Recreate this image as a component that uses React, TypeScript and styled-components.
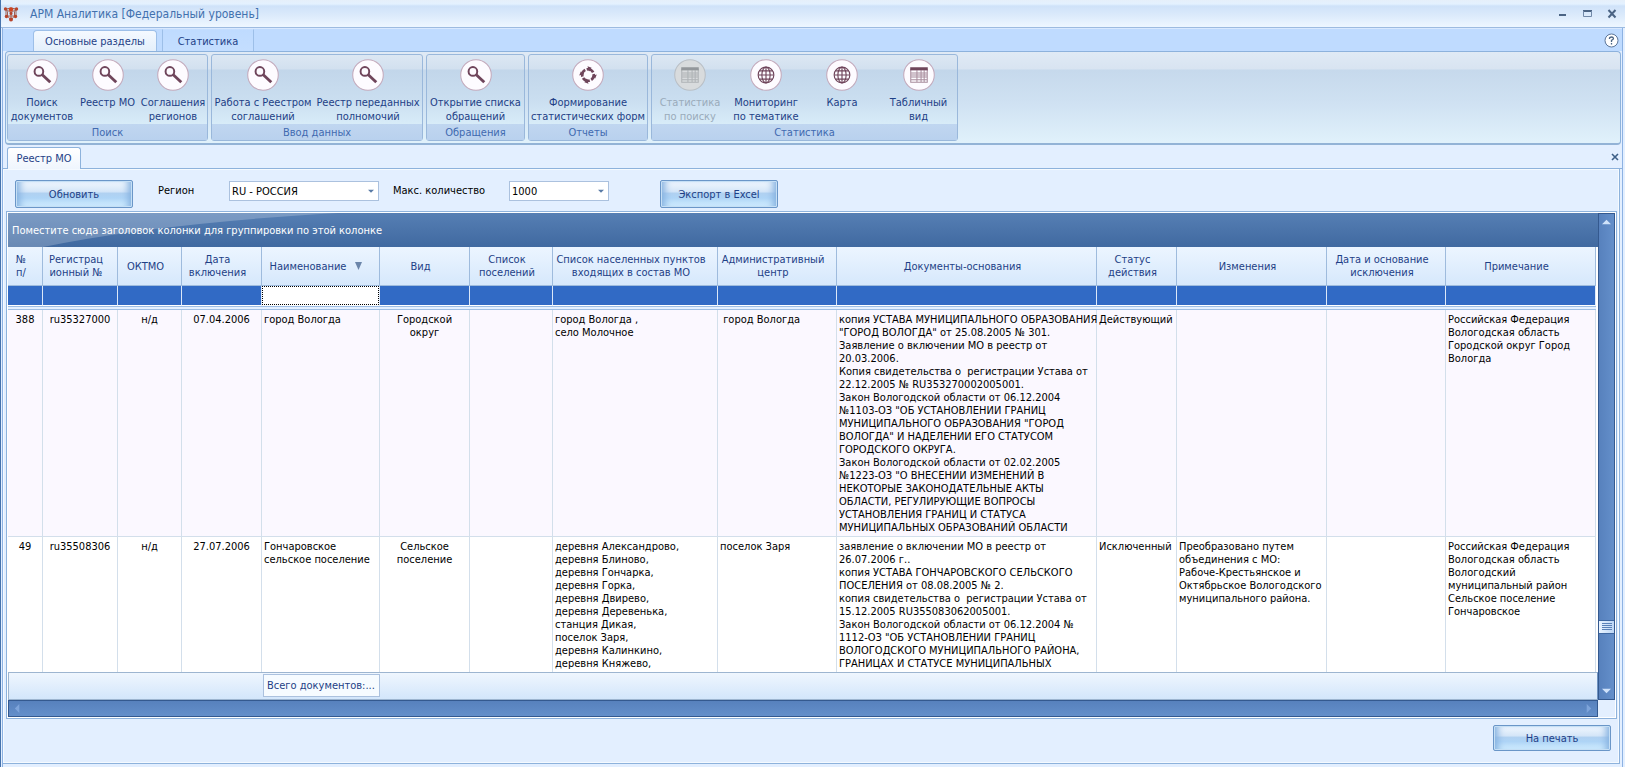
import React from 'react';
import styled, { createGlobalStyle } from 'styled-components';

const Global = createGlobalStyle`
  *, *::before, *::after { box-sizing: border-box; }
  html, body, #root { height: 100%; margin: 0; }
  body, button, select, input {
    font-family: 'DejaVu Sans Condensed', 'DejaVu Sans', Tahoma, sans-serif;
    font-size: 11px;
    line-height: 13px;
  }
  body { color: #000; background: #e3efff; }
`;

const navy = '#1e3f86';

const Window = styled.div`
  display: flex;
  flex-direction: column;
  height: 100vh;
  min-height: 560px;
  background: #e3efff;
  border-left: 1px solid #4673ac;
  overflow: hidden;
`;

const TitleBar = styled.header`
  flex: none;
  display: flex;
  align-items: center;
  height: 28px;
  padding: 0 1px 0 2px;
  background: linear-gradient(#e6effa 0, #e4f1ff 4px, #cfe2f9 6px, #dbeafb 15px, #edf6ff 26px);
  border-bottom: 1px solid #9dbbe0;
`;

const Title = styled.h1`
  flex: 1;
  margin: 0 0 0 11px;
  font-size: 12px;
  line-height: 16px;
  font-weight: 400;
  color: #4271ae;
`;

const WindowButton = styled.button`
  display: flex;
  align-items: center;
  justify-content: center;
  width: 25px;
  height: 18px;
  padding: 0;
  border: 0;
  background: none;
`;

const Frame = styled.div`
  flex: 1;
  min-height: 0;
  display: flex;
  flex-direction: column;
  margin-left: 1px;
  margin-right: 2px;
  border-left: 1px solid #8db2e3;
  border-right: 1px solid #8db2e3;
`;

const TabStrip = styled.nav`
  flex: none;
  display: flex;
  align-items: flex-end;
  height: 23px;
  padding: 0 3px 0 30px;
  background: #bfdbff;
  border-top: 1px solid #d9e9ff;
`;

const RibbonTab = styled.button<{ $active?: boolean }>`
  height: ${(p) => (p.$active ? 21 : 22)}px;
  width: ${(p) => (p.$active ? 124 : 92)}px;
  margin-left: ${(p) => (p.$active ? 0 : 5)}px;
  padding: ${(p) => (p.$active ? 0 : 2)}px 0 0;
  color: ${navy};
  border: 1px solid ${(p) => (p.$active ? '#9dbfe8' : 'transparent')};
  border-bottom: 0;
  border-left-color: #9dbfe8;
  border-right-color: #9dbfe8;
  border-radius: ${(p) => (p.$active ? '4px 4px 0 0' : '0')};
  background: ${(p) => (p.$active ? 'linear-gradient(#f4f9ff, #e4effb)' : 'linear-gradient(#bfdbff, #c4deff)')};
`;

const HelpButton = styled.button`
  display: flex;
  padding: 0;
  margin: 0 0 3px auto;
  border: 0;
  background: none;
`;

const Ribbon = styled.section`
  flex: none;
  display: flex;
  gap: 3px;
  height: 94px;
  margin: 0 1px 0 2px;
  padding: 2px 1px;
  border: 1px solid #8db2dc;
  border-bottom: 2px solid #93b3d6;
  border-radius: 4px;
  background: linear-gradient(#e0eaf5 0, #d8e4f1 17px, #c6d9ec 18px, #cfe1f2 50px, #e0f1fb 90px);
`;

const Group = styled.section`
  display: flex;
  flex-direction: column;
  width: max-content;
  border: 1px solid #9ab8db;
  border-radius: 3px;
  background: linear-gradient(#dce7f3 0, #d2e0ef 14px, #c2d6ea 15px, #cadef0 45px, #d9edf9 71px);
`;

const GroupItems = styled.div`
  flex: 1;
  display: flex;
  justify-content: center;
`;

const GroupCaption = styled.h2`
  margin: 0;
  height: 16px;
  font-size: 11px;
  line-height: 18px;
  font-weight: 400;
  text-align: center;
  color: #416ab0;
  background: linear-gradient(#c0d6f0, #b9d1ee);
`;

const ToolButton = styled.button<{ $width: number }>`
  display: flex;
  flex-direction: column;
  align-items: center;
  width: ${(p) => p.$width}px;
  padding: 4px 0 0;
  border: 0;
  background: none;
  color: ${navy};
  line-height: 14px;
  white-space: pre;
  &:disabled { color: #9aabba; }
  svg { margin-bottom: 5px; }
`;

const DocTabs = styled.nav`
  flex: none;
  display: flex;
  align-items: flex-end;
  justify-content: space-between;
  height: 24px;
  padding: 0 3px 0 4px;
  border-bottom: 1px solid #8db2dc;
`;

const DocTab = styled.button`
  width: 74px;
  height: 22px;
  margin-bottom: -1px;
  padding: 0;
  color: ${navy};
  background: linear-gradient(#fff, #eff5fd);
  border: 1px solid #8db2dc;
  border-bottom: 0;
  border-radius: 3px 3px 0 0;
`;

const CloseTab = styled.button`
  display: flex;
  padding: 0;
  margin-bottom: 7px;
  border: 0;
  background: none;
`;

const Page = styled.main`
  flex: 1;
  min-height: 0;
  display: flex;
  flex-direction: column;
  margin: 0 2px 3px 0;
  padding: 0 1px 0 3px;
  border: solid #8db2dc;
  border-width: 0 1px 1px 0;
  box-shadow: inset 1px 1px #f5faff, inset -1px -1px #f5faff;
`;

const Filters = styled.form`
  flex: none;
  display: flex;
  height: 42px;
  padding: 11px 9px 0;
`;

const ActionButton = styled.button<{ $narrow?: boolean }>`
  width: 118px;
  height: ${(p) => (p.$narrow ? 26 : 28)}px;
  padding: 0;
  color: ${navy};
  border: 1px solid #6a96c8;
  border-radius: 2px;
  background: linear-gradient(#f2f8fe 0, #d5e6f8 40%, #b0d1f1 48%, #aed4f6 65%, #d5f0ff 100%);
  box-shadow: inset 0 0 0 1px #c5dff5, inset 8px 0 7px -4px #86b2e0, inset -8px 0 7px -4px #86b2e0;
`;

const FieldLabel = styled.label<{ $width: number; $gap: number }>`
  width: ${(p) => p.$width}px;
  margin-left: ${(p) => p.$gap}px;
  line-height: 22px;
`;

const SelectBox = styled.span<{ $width: number; $gap?: number }>`
  display: flex;
  align-items: center;
  width: ${(p) => p.$width}px;
  height: 20px;
  margin: 1px ${(p) => p.$gap || 0}px 0 0;
  padding-right: 4px;
  background: #fff;
  border: 1px solid #abc1de;
`;

const Select = styled.select`
  appearance: none;
  flex: 1;
  min-width: 0;
  height: 18px;
  padding: 0 2px;
  border: 0;
  background: transparent;
  color: #000;
`;

const GridFrame = styled.section`
  flex: 1;
  min-height: 0;
  display: grid;
  grid-template: minmax(0, 1fr) 17px / minmax(0, 1fr) 17px;
  margin-right: 1px;
  padding: 1px;
  border: 1px solid #8db2dc;
  background: #fff;
`;

const GridArea = styled.div`
  display: flex;
  flex-direction: column;
  min-height: 0;
`;

const GroupPanel = styled.div`
  flex: none;
  position: relative;
  height: 34px;
  padding-left: 4px;
  line-height: 36px;
  color: #fff;
  background: linear-gradient(#567fb4, #4069a0);
  span { position: relative; }
`;

const Sheen = styled.svg`
  position: absolute;
  left: 0;
  top: 0;
  width: 330px;
  height: 34px;
`;

const Viewport = styled.div`
  flex: 1;
  min-height: 0;
  overflow: hidden;
  padding-right: 2px;
`;

const Table = styled.table`
  width: 100%;
  table-layout: fixed;
  border-collapse: separate;
  border-spacing: 0;
`;

const HeadCell = styled.th`
  height: 39px;
  padding: 0 8px 0 0;
  font-weight: 400;
  color: ${navy};
  white-space: pre;
  vertical-align: middle;
  background: linear-gradient(#ecf5ff, #d6e8fc);
  border-right: 1px solid #9ebbdd;
  border-bottom: 1px solid #9ebbdd;
  svg { margin-left: 8px; }
`;

const FilterCell = styled.td`
  height: 20px;
  padding: 0;
  background: #316ac5;
  border-right: 1px solid #dce8f8;
  border-bottom: 1px solid #fff;
`;

const FilterInput = styled.input`
  display: block;
  width: 100%;
  height: 19px;
  padding: 0 2px;
  border: 1px dotted #000;
  border-radius: 0;
  background: #fff;
`;

const Divider = styled.td`
  height: 4px;
  padding: 0;
  background: #e3efff;
  border: solid #9dbde3;
  border-width: 1px 0;
`;

const Cell = styled.td<{ $align?: string; $alt?: boolean; $height: number }>`
  height: ${(p) => p.$height}px;
  padding: 3px 0 0 ${(p) => (p.$align === 'left' ? 2 : 0)}px;
  text-align: ${(p) => p.$align};
  vertical-align: top;
  white-space: pre;
  background: ${(p) => (p.$alt ? '#fbf8ff' : '#fff')};
  border-right: 1px solid #d3dfeb;
  border-bottom: 1px solid #d3dfeb;
`;

const Totals = styled.footer`
  flex: none;
  display: flex;
  height: 28px;
  padding: 1px 0 2px 254px;
  background: linear-gradient(#eff6fe, #d3e6fb);
  border: 1px solid #9db5d0;
  border-right-color: #6f93c2;
`;

const TotalBox = styled.output`
  width: 117px;
  padding-left: 3px;
  line-height: 22px;
  white-space: nowrap;
  overflow: hidden;
  color: ${navy};
  background: #f6fbff;
  border: 1px solid #abc1de;
`;

const ScrollV = styled.div`
  display: flex;
  flex-direction: column;
  align-items: center;
  padding: 4px 0;
  background: linear-gradient(90deg, #5781bd, #648fca);
  border: 1px solid #34598f;
`;

const Track = styled.div`
  flex: 1;
  align-self: stretch;
  display: flex;
  flex-direction: column;
`;

const TrackSpace = styled.div<{ $grow: number }>`
  flex: ${(p) => p.$grow} 1 0;
`;

const Thumb = styled.div`
  height: 14px;
  display: flex;
  align-items: center;
  justify-content: center;
  background: linear-gradient(90deg, #eaf4ff, #bcd6f5);
  border: 1px solid #3f68a2;
  border-width: 1px 0;
`;

const ScrollH = styled.div`
  display: flex;
  align-items: center;
  justify-content: space-between;
  padding: 0 4px;
  background: linear-gradient(#5781bd, #648fca);
  border: 1px solid #34598f;
`;

const Corner = styled.div`
  background: #e3efff;
`;

const BottomBar = styled.div`
  flex: none;
  display: flex;
  justify-content: flex-end;
  height: 44px;
  padding: 6px 7px 0;
`;

const Arrow = ({ dir, color, size = 9 }: { dir: 'up' | 'down' | 'left' | 'right'; color: string; size?: number }) => {
  const points = { up: '0,7 5,2 10,7', down: '0,3 5,8 10,3', left: '7,0 2,5 7,10', right: '3,0 8,5 3,10' }[dir];
  return (
    <svg width={size} height={size} viewBox="0 0 10 10" aria-hidden="true">
      <polygon points={points} fill={color} />
    </svg>
  );
};

const AppIcon = () => (
  <svg width="16" height="16" viewBox="0 0 16 16" aria-hidden="true">
    <path d="M3 3L8 2L13 3L11.500 6V10L8 14L4.500 10V6ZM3 3L8 7L13 3M8 2V14M3 3V10M13 3V10M2 10H14" fill="none" stroke="#9d6257" strokeWidth="1" />
    <g fill="#b8442a">
      <circle cx="2.500" cy="3" r="1.700" /><circle cx="8" cy="3.500" r="2.200" fill="#cf4420" /><circle cx="13.500" cy="3" r="1.700" />
      <circle cx="8" cy="7.500" r="1.500" /><circle cx="3.500" cy="10.500" r="1.700" /><circle cx="12.500" cy="10.500" r="1.700" />
      <circle cx="8" cy="13.500" r="2" />
    </g>
  </svg>
);

type IconName = 'search' | 'cycle' | 'table' | 'globe';

const glyphs: Record<IconName, React.ReactNode> = {
  search: (
    <g fill="none">
      <circle cx="12.500" cy="12" r="4.200" strokeWidth="1.900" />
      <path d="M15.500 15L23.500 22.500" strokeWidth="2.800" />
    </g>
  ),
  cycle: (
    <g>
      <circle cx="15.500" cy="15.500" r="5.600" fill="none" strokeWidth="2.600" strokeDasharray="7.300 1.500" strokeDashoffset="2" />
      <path d="M15 7L19 8.500L16.500 12ZM24 15L22.500 19L19.500 16.500ZM16 24L12 22.500L14.500 19ZM7 16L8.500 12L11.500 14.500Z" stroke="none" />
    </g>
  ),
  table: (
    <g strokeWidth="1">
      <rect x="7" y="8" width="17" height="3" stroke="none" />
      <path d="M7.500 10V22.500H23.500V10M13.500 11V22M17.500 11V22M20.500 11V22M7.500 13.500H23.500M7.500 15.500H23.500M7.500 17.500H23.500M7.500 20H23.500" fill="none" opacity="0.600" />
    </g>
  ),
  globe: (
    <g fill="none" strokeWidth="1.100">
      <circle cx="15.500" cy="15.500" r="7.600" />
      <ellipse cx="15.500" cy="15.500" rx="4" ry="7.600" />
      <path d="M15.500 8V23M8 15.500H23M9 11.500H22M9 19.500H22" />
    </g>
  ),
};

const RoundIcon = ({ name, off }: { name: IconName; off?: boolean }) => {
  const ink = off ? '#93979b' : '#6f455b';
  return (
    <svg width="32" height="32" viewBox="0 0 31 31" aria-hidden="true">
      <circle cx="15.500" cy="15.500" r="14.800" fill={off ? '#d8dbdd' : '#fdfbff'} stroke={off ? '#b9bfc5' : '#c3a9bb'} />
      <g stroke={ink} fill={ink}>{glyphs[name]}</g>
    </svg>
  );
};

type Tool = { label: string; icon: IconName; width: number; off?: boolean };
const groups: { caption: string; tools: Tool[] }[] = [
  { caption: 'Поиск', tools: [
    { label: 'Поиск\nдокументов', icon: 'search', width: 68 },
    { label: 'Реестр МО', icon: 'search', width: 63 },
    { label: 'Соглашения\nрегионов', icon: 'search', width: 68 },
  ] },
  { caption: 'Ввод данных', tools: [
    { label: 'Работа с Реестром\nсоглашений', icon: 'search', width: 102 },
    { label: 'Реестр переданных\nполномочий', icon: 'search', width: 108 },
  ] },
  { caption: 'Обращения', tools: [{ label: 'Открытие списка\nобращений', icon: 'search', width: 97 }] },
  { caption: 'Отчеты', tools: [{ label: 'Формирование\nстатистических форм', icon: 'cycle', width: 118 }] },
  { caption: 'Статистика', tools: [
    { label: 'Статистика\nпо поиску', icon: 'table', width: 76, off: true },
    { label: 'Мониторинг\nпо тематике', icon: 'globe', width: 76 },
    { label: 'Карта', icon: 'globe', width: 76 },
    { label: 'Табличный\nвид', icon: 'table', width: 77 },
  ] },
];

type Column = { title: string; width?: number; align: string; sorted?: boolean };
const columns: Column[] = [
  { title: '№\nп/', width: 35, align: 'center' },
  { title: 'Регистрац\nионный №', width: 75, align: 'center' },
  { title: 'ОКТМО', width: 64, align: 'center' },
  { title: 'Дата\nвключения', width: 80, align: 'center' },
  { title: 'Наименование', width: 118, align: 'left', sorted: true },
  { title: 'Вид', width: 90, align: 'center' },
  { title: 'Список\nпоселений', width: 83, align: 'left' },
  { title: 'Список населенных пунктов\nвходящих в состав МО', width: 165, align: 'left' },
  { title: 'Административный\nцентр', width: 119, align: 'left' },
  { title: 'Документы-основания', align: 'left' },
  { title: 'Статус\nдействия', width: 80, align: 'left' },
  { title: 'Изменения', width: 150, align: 'left' },
  { title: 'Дата и основание\nисключения', width: 119, align: 'left' },
  { title: 'Примечание', width: 150, align: 'left' },
];

const rows = [
  ['388', 'ru35327000', 'н/д', '07.04.2006', 'город Вологда', 'Городской\nокруг', '',
    'город Вологда ,\nсело Молочное', ' город Вологда',
    `копия УСТАВА МУНИЦИПАЛЬНОГО ОБРАЗОВАНИЯ
"ГОРОД ВОЛОГДА" от 25.08.2005 № 301.
Заявление о включении МО в реестр от
20.03.2006.
Копия свидетельства о  регистрации Устава от
22.12.2005 № RU353270002005001.
Закон Вологодской области от 06.12.2004
№1103-ОЗ "ОБ УСТАНОВЛЕНИИ ГРАНИЦ
МУНИЦИПАЛЬНОГО ОБРАЗОВАНИЯ "ГОРОД
ВОЛОГДА" И НАДЕЛЕНИИ ЕГО СТАТУСОМ
ГОРОДСКОГО ОКРУГА.
Закон Вологодской области от 02.02.2005
№1223-ОЗ "О ВНЕСЕНИИ ИЗМЕНЕНИЙ В
НЕКОТОРЫЕ ЗАКОНОДАТЕЛЬНЫЕ АКТЫ
ОБЛАСТИ, РЕГУЛИРУЮЩИЕ ВОПРОСЫ
УСТАНОВЛЕНИЯ ГРАНИЦ И СТАТУСА
МУНИЦИПАЛЬНЫХ ОБРАЗОВАНИЙ ОБЛАСТИ`,
    'Действующий', '', '', 'Российская Федерация\nВологодская область\nГородской округ Город\nВологда'],
  ['49', 'ru35508306', 'н/д', '27.07.2006', 'Гончаровское\nсельское поселение', 'Сельское\nпоселение', '',
    'деревня Александрово,\nдеревня Блиново,\nдеревня Гончарка,\nдеревня Горка,\nдеревня Двирево,\nдеревня Деревенька,\nстанция Дикая,\nпоселок Заря,\nдеревня Калинкино,\nдеревня Княжево,',
    'поселок Заря',
    `заявление о включении МО в реестр от
26.07.2006 г..
копия УСТАВА ГОНЧАРОВСКОГО СЕЛЬСКОГО
ПОСЕЛЕНИЯ от 08.08.2005 № 2.
копия свидетельства о  регистрации Устава от
15.12.2005 RU355083062005001.
Закон Вологодской области от 06.12.2004 №
1112-ОЗ "ОБ УСТАНОВЛЕНИИ ГРАНИЦ
ВОЛОГОДСКОГО МУНИЦИПАЛЬНОГО РАЙОНА,
ГРАНИЦАХ И СТАТУСЕ МУНИЦИПАЛЬНЫХ`,
    'Исключенный', 'Преобразовано путем\nобъединения с МО:\nРабоче-Крестьянское и\nОктябрьское Вологодского\nмуниципального района.', '',
    'Российская Федерация\nВологодская область\nВологодский\nмуниципальный район\nСельское поселение\nГончаровское'],
];

export default function App() {
  return (
    <>
      <Global />
      <Window>
        <TitleBar>
          <AppIcon />
          <Title>АРМ Аналитика [Федеральный уровень]</Title>
          <WindowButton aria-label="Свернуть">
            <svg width="12" height="12" viewBox="0 0 12 12"><path d="M3 7H10" stroke="#4b6484" strokeWidth="2" /></svg>
          </WindowButton>
          <WindowButton aria-label="Развернуть">
            <svg width="12" height="12" viewBox="0 0 12 12"><path d="M2 3H11" stroke="#4b6484" strokeWidth="2" /><path d="M2.500 3V8.500H10.500V3" fill="none" stroke="#7189a8" /></svg>
          </WindowButton>
          <WindowButton aria-label="Закрыть">
            <svg width="12" height="12" viewBox="0 0 12 12"><path d="M2.500 2L9.500 9.500M9.500 2L2.500 9.500" stroke="#4b6484" strokeWidth="2" /></svg>
          </WindowButton>
        </TitleBar>
        <Frame>
          <TabStrip>
            <RibbonTab $active>Основные разделы</RibbonTab>
            <RibbonTab>Статистика</RibbonTab>
            <HelpButton aria-label="Справка">
              <svg width="15" height="15" viewBox="0 0 15 15">
                <circle cx="7.500" cy="7.500" r="6.500" fill="#fff" stroke="#5d7699" />
                <path d="M5.500 6V5Q5.700 4 7.500 4T9.500 5.500Q9.500 6.500 7.500 7.300V9M7.500 10V11.500" fill="none" stroke="#4b6484" strokeWidth="1.300" />
              </svg>
            </HelpButton>
          </TabStrip>
          <Ribbon>
            {groups.map((g) => (
              <Group key={g.caption}>
                <GroupItems>
                  {g.tools.map((t) => (
                    <ToolButton key={t.label} $width={t.width} disabled={t.off}>
                      <RoundIcon name={t.icon} off={t.off} />
                      {t.label}
                    </ToolButton>
                  ))}
                </GroupItems>
                <GroupCaption>{g.caption}</GroupCaption>
              </Group>
            ))}
          </Ribbon>
          <DocTabs>
            <DocTab>Реестр МО</DocTab>
            <CloseTab aria-label="Закрыть вкладку">
              <svg width="8" height="8" viewBox="0 0 8 8"><path d="M1 1L7 7M7 1L1 7" stroke="#3d5f87" strokeWidth="1.600" /></svg>
            </CloseTab>
          </DocTabs>
          <Page>
            <Filters onSubmit={(e) => e.preventDefault()}>
              <ActionButton type="button">Обновить</ActionButton>
              <FieldLabel htmlFor="region" $width={71} $gap={25}>Регион</FieldLabel>
              <SelectBox $width={150} $gap={14}>
                <Select id="region" defaultValue="RU"><option value="RU">RU - РОССИЯ</option></Select>
                <Arrow dir="down" color="#5a7ba6" size={6} />
              </SelectBox>
              <FieldLabel htmlFor="limit" $width={116} $gap={0}>Макс. количество</FieldLabel>
              <SelectBox $width={100} $gap={51}>
                <Select id="limit" defaultValue="1000"><option>1000</option></Select>
                <Arrow dir="down" color="#5a7ba6" size={6} />
              </SelectBox>
              <ActionButton type="button">Экспорт в Excel</ActionButton>
            </Filters>
            <GridFrame>
              <GridArea>
                <GroupPanel>
                  <Sheen viewBox="0 0 330 33" preserveAspectRatio="none" aria-hidden="true">
                    <path d="M0 0H330Q150 10 35 33H0Z" fill="#fff" opacity="0.220" />
                  </Sheen>
                  <span>Поместите сюда заголовок колонки для группировки по этой колонке</span>
                </GroupPanel>
                <Viewport>
                  <Table>
                    <colgroup>
                      {columns.map((c) => <col key={c.title} width={c.width} />)}
                    </colgroup>
                    <thead>
                      <tr>
                        {columns.map((c) => (
                          <HeadCell key={c.title} scope="col">
                            {c.title}
                            {c.sorted && (
                              <svg width="9" height="8" viewBox="0 0 9 8" aria-hidden="true"><polygon points="1,0 8,0 4.500,8" fill="#6c86aa" /></svg>
                            )}
                          </HeadCell>
                        ))}
                      </tr>
                    </thead>
                    <tbody>
                      <tr>
                        {columns.map((c) => (
                          <FilterCell key={c.title}>{c.sorted && <FilterInput aria-label="Фильтр: Наименование" />}</FilterCell>
                        ))}
                      </tr>
                      <tr><Divider colSpan={columns.length} /></tr>
                      {rows.map((row, r) => (
                        <tr key={row[0]}>
                          {row.map((text, i) => (
                            <Cell key={columns[i].title} $align={columns[i].align} $alt={r === 0} $height={r === 0 ? 227 : 160}>{text}</Cell>
                          ))}
                        </tr>
                      ))}
                    </tbody>
                  </Table>
                </Viewport>
                <Totals><TotalBox>Всего документов:...</TotalBox></Totals>
              </GridArea>
              <ScrollV>
                <Arrow dir="up" color="#cfe2fa" />
                <Track>
                  <TrackSpace $grow={393} />
                  <Thumb>
                    <svg width="10" height="8" viewBox="0 0 10 8" aria-hidden="true"><path d="M0 0.500H10M0 2.500H10M0 4.500H10M0 6.500H10" stroke="#5b82b8" /></svg>
                  </Thumb>
                  <TrackSpace $grow={52} />
                </Track>
                <Arrow dir="down" color="#cfe2fa" />
              </ScrollV>
              <ScrollH>
                <Arrow dir="left" color="#7ea4da" />
                <Arrow dir="right" color="#7ea4da" />
              </ScrollH>
              <Corner />
            </GridFrame>
            <BottomBar><ActionButton $narrow>На печать</ActionButton></BottomBar>
          </Page>
        </Frame>
      </Window>
    </>
  );
}
